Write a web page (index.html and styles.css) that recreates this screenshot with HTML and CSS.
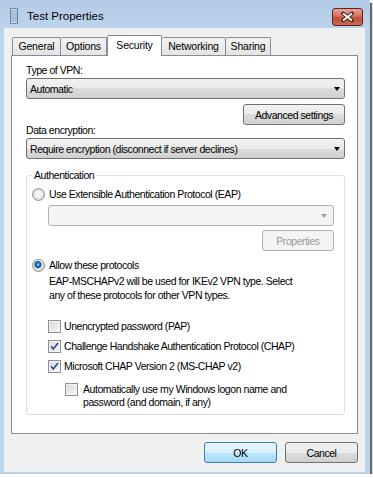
FILE: index.html
```html
<!DOCTYPE html>
<html lang="en">
<head>
<meta charset="UTF-8"/>
<meta name="viewport" content="width=device-width,initial-scale=1.0"/>
<title>Test Properties</title>
<link rel="stylesheet" href="styles.css">
</head>
<body>
<div class="window">

  <!-- ─── TITLE BAR ──────────────────────────────────────────── -->
  <div class="titlebar">
    <svg class="app-icon" width="8" height="16" viewBox="0 0 8 16">
      <rect x=".5" y=".5" width="7" height="15" fill="#d6e0ec" stroke="#6d88a8"/>
      <path d="M1 3h6M1 5h6M1 7h6M1 9h6M1 11h6M1 13h6" stroke="#7f9bbd" stroke-width="1"/>
    </svg>
    <span class="title">Test Properties</span>
    <button class="close" title="Close">
      <svg width="29" height="16" viewBox="0 0 29 16">
        <path d="M10 4.5l9 7M19 4.5l-9 7" stroke="#3b1c1c" stroke-width="3.6" stroke-linecap="round"/>
        <path d="M10 4.5l9 7M19 4.5l-9 7" stroke="#fff" stroke-width="2"/>
      </svg>
    </button>
  </div>

  <!-- ─── CLIENT AREA ────────────────────────────────────────── -->
  <div class="client">
    <div class="tabs">
      <span class="tab w-general">General</span>
      <span class="tab w-options">Options</span>
      <span class="tab w-security active">Security</span>
      <span class="tab w-network">Networking</span>
      <span class="tab w-sharing">Sharing</span>
    </div>

    <div class="panel">
      <div class="lbl">Type of VPN:</div>
      <div class="combo"><span>Automatic</span><i class="arrow"></i></div>
      <div class="right"><button class="btn adv">Advanced settings</button></div>

      <div class="lbl tight">Data encryption:</div>
      <div class="combo"><span>Require encryption (disconnect if server declines)</span><i class="arrow"></i></div>

      <fieldset class="group">
        <legend>Authentication</legend>
        <div class="row first"><span class="radio"></span>Use Extensible Authentication Protocol (EAP)</div>
        <div class="combo off sub"><i class="arrow"></i></div>
        <div class="right"><button class="btn off props">Properties</button></div>

        <div class="row allow"><span class="radio on"></span>Allow these protocols</div>
        <p class="note">EAP-MSCHAPv2 will be used for IKEv2 VPN type. Select<br>any of these protocols for other VPN types.</p>

        <div class="checks">
          <div class="row chk"><span class="box"></span>Unencrypted password (PAP)</div>
          <div class="row chk"><span class="box on"><svg width="11" height="11" viewBox="0 0 11 11"><path d="M2 5.2l2.3 2.8L9 2" stroke="#354d8c" stroke-width="1.7" fill="none"/></svg></span>Challenge Handshake Authentication Protocol (CHAP)</div>
          <div class="row chk"><span class="box on"><svg width="11" height="11" viewBox="0 0 11 11"><path d="M2 5.2l2.3 2.8L9 2" stroke="#354d8c" stroke-width="1.7" fill="none"/></svg></span>Microsoft CHAP Version 2 (MS-CHAP v2)</div>
        </div>
        <div class="row auto"><span class="box"></span><span>Automatically use my Windows logon name and<br>password (and domain, if any)</span></div>
      </fieldset>
    </div>

    <div class="footer">
      <button class="btn ok">OK</button>
      <button class="btn">Cancel</button>
    </div>
  </div>
</div>
</body>
</html>
```

FILE: styles.css
```css
*,*::before,*::after{box-sizing:border-box}
body{margin:0;background:#fff;font:10.5px "Liberation Sans",Arial,sans-serif;letter-spacing:-.45px;color:#000}
button{font:inherit;color:inherit;letter-spacing:inherit;padding:0;cursor:default}

/* ─── WINDOW FRAME ───────────────────────────────────────────── */
.window{width:370px;height:474px;background:linear-gradient(#b3cbe7,#bcd3ec 28px,#bcd3ec);box-shadow:2px 3px 1px rgba(0,0,0,.6)}
.titlebar{height:28px;display:flex;align-items:flex-start}
.app-icon{margin:8px 0 0 10px;flex:none}
.title{margin:9px 0 0 9px;font-size:11.5px;letter-spacing:0;line-height:14px}
.close{margin:8px 7px 0 auto;width:31px;height:18px;border:1px solid #5e2424;border-radius:3px;display:grid;place-items:center;
  background:linear-gradient(#e8a493,#d4715f 45%,#c14d39 55%,#cf6a4f)}

/* ─── CLIENT ─────────────────────────────────────────────────── */
.client{margin-left:4px;width:361px;height:444px;background:#f0f0f0;display:flex;flex-direction:column;padding-top:7px}

.tabs{display:flex;align-items:flex-end;height:20px;margin-left:8px}
.tab{height:18px;display:grid;place-items:center;border:1px solid #898c95;border-bottom:none;border-radius:2px 2px 0 0;
  background:linear-gradient(#f3f3f3,#e4e4e4);line-height:1;letter-spacing:-.2px}
.tab + .tab{border-left:none}
.tab.active{height:21px;margin-bottom:-1px;background:#fff;position:relative;z-index:1;border-left:1px solid #898c95;padding-bottom:2px}
.tab.active + .tab{border-left:none}
.w-general{width:49px}.w-options{width:46px}.w-security{width:55px}.w-network{width:64px}.w-sharing{width:45px}

.panel{flex:1;margin:0 7px;background:#fff;border:1px solid #898c95;padding:7px 12px 0 14px}

/* ─── FIELDS ─────────────────────────────────────────────────── */
.lbl{line-height:14px}
.lbl.tight{line-height:12px;margin-top:-1px}
.combo{height:21px;margin-top:1px;display:flex;align-items:center;padding:0 4px 0 3px;border:1px solid #707070;border-radius:3px;
  background:linear-gradient(#f2f2f2,#ebebeb 50%,#dddddd 50%,#cfcfcf);white-space:nowrap}
.combo + .group{margin-top:10px}
.lbl.tight + .combo{margin-top:2px}
.arrow{margin-left:auto;width:0;height:0;border-left:3.5px solid transparent;border-right:3.5px solid transparent;border-top:4px solid #000}
.combo.off{border-color:#adb2b5;background:#f4f4f4}
.combo.off .arrow{border-top-color:#a0a0a0;margin-right:2px}
.combo.sub{margin:4px 0 0 16px}

.right{display:flex;justify-content:flex-end}
.btn{height:21px;border:1px solid #707070;border-radius:3px;background:linear-gradient(#f2f2f2,#ebebeb 50%,#dddddd 50%,#cfcfcf)}
.btn.adv{width:102px;margin-top:5px}
.btn.off{border-color:#adb2b5;background:#f4f4f4;color:#9a9a9a}
.btn.props{width:72px;margin-top:4px}

/* ─── AUTHENTICATION GROUP ───────────────────────────────────── */
.group{margin:0;padding:0 10px 5px 5px;border:1px solid #d5dfe5;border-radius:3px;min-width:0}
.group legend{padding:0 2px;line-height:12px}
.row{display:flex;align-items:center;line-height:13px}
.row.first{margin-top:7px}
.row.allow{margin-top:8px}
.radio{flex:none;width:13px;height:13px;margin-right:4px;border-radius:50%;border:1px solid #8e8f8f;
  background:radial-gradient(circle,#f8f8f8 0,#f2f2f2 3px,#d8d8d8 5.5px)}
.radio.on{background:radial-gradient(circle at 45% 42%,#a9dcff 0,#2c8bd6 1.4px,#0e4d86 3px,#8da4ba 3.6px,#f2f2f2 4.2px,#d8d8d8 5.5px)}
.note{margin:2px 0 0 17px;line-height:14px}

.checks{margin:14px 0 0 16px}
.chk{height:20px}
.box{flex:none;width:13px;height:13px;margin-right:3px;border:1px solid #8f8f8f;display:grid;place-items:center;
  background:linear-gradient(135deg,#d5d8dc,#f7f7f7);box-shadow:inset 0 0 0 1px #f4f4f4}
.auto{margin:7px 0 0 33px;align-items:flex-start}
.auto .box{margin-right:5px}

/* ─── DIALOG BUTTONS ─────────────────────────────────────────── */
.footer{display:flex;justify-content:flex-end;gap:8px;padding:0 7px;margin:8px 0 9px}
.footer .btn{width:73px}
.btn.ok{border-color:#3c7fb1;background:linear-gradient(#eaf6fd,#d9f0fc 50%,#bee6fd 50%,#a7d9f5)}
```
